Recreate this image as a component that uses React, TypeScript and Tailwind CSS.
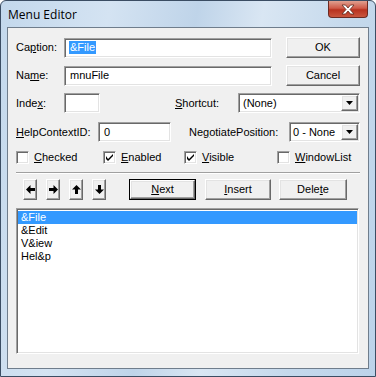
import React from "react";

const sunken =
  "bg-white border border-t-[#a0a0a0] border-l-[#a0a0a0] border-b-white border-r-white shadow-[inset_1px_1px_0_#696969,inset_-1px_-1px_0_#e3e3e3]";
const raised =
  "bg-[#f0f0f0] border border-t-white border-l-white border-b-[#696969] border-r-[#696969] shadow-[inset_-1px_-1px_0_#a0a0a0,inset_1px_1px_0_#e3e3e3]";

function Btn({ w, children, focused }: { w: number; children: React.ReactNode; focused?: boolean }) {
  return (
    <div
      className={
        "h-[21px] flex items-center justify-center " +
        (focused ? "border border-[#000] " : "")
      }
      style={{ width: w }}
    >
      <div className={raised + " w-full h-full flex items-center justify-center"}>{children}</div>
    </div>
  );
}

function DropArrow() {
  return (
    <div className={raised + " w-[17px] h-full flex items-center justify-center"}>
      <svg width="7" height="4" viewBox="0 0 7 4">
        <path d="M0 0H7L3.5 4Z" fill="#000" />
      </svg>
    </div>
  );
}

function Check({ checked, label }: { checked?: boolean; label: React.ReactNode }) {
  return (
    <div className="flex items-center">
      <div className={sunken + " w-[13px] h-[13px] flex items-center justify-center"}>
        {checked && (
          <svg width="7" height="7" viewBox="0 0 7 7">
            <path d="M0 2V5L2 7L7 2V0L2 5Z" fill="#000" />
          </svg>
        )}
      </div>
      <span className="ml-[5px]">{label}</span>
    </div>
  );
}

function Arrow({ dir }: { dir: "l" | "r" | "u" | "d" }) {
  const rot = { l: 0, r: 180, u: 90, d: 270 }[dir];
  return (
    <svg width="9" height="9" viewBox="0 0 9 9" style={{ transform: `rotate(${rot}deg)` }}>
      <path d="M0 4.5L4.5 0V3H9V6H4.5V9Z" fill="#000" />
    </svg>
  );
}

export default function App() {
  return (
    <div className="w-[376px] h-[377px] rounded-t-[6px] border border-[#3b4d63] bg-[linear-gradient(100deg,#c3d8ec_0%,#d4e3f2_25%,#bfd4e9_45%,#d9e6f3_60%,#c5d9ec_80%,#bcd3ea_100%)] relative font-['Tahoma','Liberation_Sans',sans-serif] text-[11px] text-black overflow-hidden">
      {/* title bar */}
      <div className="h-[26px] flex items-center pl-[7px]">
        <span className="font-['Segoe_UI','Open_Sans',sans-serif] text-[12px] text-black mt-[2px]">Menu Editor</span>
      </div>
      <div className="absolute top-0 right-[7px] w-[40px] h-[17px] rounded-b-[4px] border border-t-0 border-[#6b2a22] bg-[linear-gradient(#e0a090_0%,#cf5a48_45%,#b8321f_55%,#c9563f_100%)] flex items-center justify-center">
        <svg width="14" height="11" viewBox="0 0 14 11">
          <path
            d="M1 1H4.5L7 4L9.5 1H13L9 5.5L13 10H9.5L7 7L4.5 10H1L5 5.5Z"
            fill="#fff"
            stroke="#5a2a20"
            strokeWidth="0.8"
          />
        </svg>
      </div>

      {/* client area */}
      <div className="mx-[6px] h-[342px] border border-[#6f7d8c] bg-[#f0f0f0] pl-[8px] pt-[9px]">
        {/* row 1 */}
        <div className="flex items-center h-[21px]">
          <span className="w-[48px]">
            Ca<u>p</u>tion:
          </span>
          <div className={sunken + " w-[208px] h-[20px] flex items-center pl-[4px]"}>
            <span className="bg-[#3399ff] text-white px-[1px] leading-[13px]">&amp;File</span>
          </div>
          <div className="ml-[14px]">
            <Btn w={74}>OK</Btn>
          </div>
        </div>
        {/* row 2 */}
        <div className="flex items-center h-[21px] mt-[7px]">
          <span className="w-[48px]">
            Na<u>m</u>e:
          </span>
          <div className={sunken + " w-[208px] h-[20px] flex items-center pl-[5px]"}>mnuFile</div>
          <div className="ml-[14px]">
            <Btn w={74}>Cancel</Btn>
          </div>
        </div>
        {/* row 3 */}
        <div className="flex items-center h-[20px] mt-[7px]">
          <span className="w-[48px]">
            Inde<u>x</u>:
          </span>
          <div className={sunken + " w-[36px] h-[20px]"} />
          <span className="ml-[75px] w-[63px]">
            <u>S</u>hortcut:
          </span>
          <div className={sunken + " w-[122px] h-[20px] flex items-center pl-[2px] pr-[1px] py-[1px]"}>
            <span className="flex-1 pl-[2px]">(None)</span>
            <DropArrow />
          </div>
        </div>
        {/* row 4 */}
        <div className="flex items-center h-[20px] mt-[9px]">
          <span className="w-[82px]">
            <u>H</u>elpContextID:
          </span>
          <div className={sunken + " w-[73px] h-[20px] flex items-center pl-[5px]"}>0</div>
          <span className="ml-[18px] w-[100px]">
            Ne<u>g</u>otiatePosition:
          </span>
          <div className={sunken + " w-[71px] h-[20px] flex items-center pl-[2px] pr-[1px] py-[1px]"}>
            <span className="flex-1 pl-[1px]">0 - None</span>
            <DropArrow />
          </div>
        </div>
        {/* row 5 checkboxes */}
        <div className="flex items-center h-[14px] mt-[8px]">
          <div className="w-[87px]">
            <Check label={<><u>C</u>hecked</>} />
          </div>
          <div className="w-[81px]">
            <Check checked label={<><u>E</u>nabled</>} />
          </div>
          <div className="w-[93px]">
            <Check checked label={<><u>V</u>isible</>} />
          </div>
          <div>
            <Check label={<><u>W</u>indowList</>} />
          </div>
        </div>
        {/* separator */}
        <div className="mt-[8px] w-[344px] h-[2px] border-t border-t-[#a0a0a0] border-b border-b-white" />
        {/* row 6 */}
        <div className="flex items-center h-[21px] mt-[5px]">
          <div className="ml-[7px] flex gap-[9px]">
            {(["l", "r", "u", "d"] as const).map((d) => (
              <div key={d} className={raised + " w-[14px] h-[21px] flex items-center justify-center"}>
                <Arrow dir={d} />
              </div>
            ))}
          </div>
          <div className="ml-[23px]">
            <Btn w={67} focused>
              <u>N</u>ext
            </Btn>
          </div>
          <div className="ml-[9px]">
            <Btn w={66}>
              <u>I</u>nsert
            </Btn>
          </div>
          <div className="ml-[8px]">
            <Btn w={68}>
              Dele<u>t</u>e
            </Btn>
          </div>
        </div>
        {/* listbox */}
        <div className={sunken + " mt-[8px] w-[343px] h-[146px] pt-[2px] px-[1px]"}>
          <div className="h-[13px] leading-[13px] bg-[#3399ff] text-white pl-[3px]">&amp;File</div>
          <div className="h-[13px] leading-[13px] pl-[3px]">&amp;Edit</div>
          <div className="h-[13px] leading-[13px] pl-[3px]">V&amp;iew</div>
          <div className="h-[13px] leading-[13px] pl-[3px]">Hel&amp;p</div>
        </div>
      </div>
    </div>
  );
}
